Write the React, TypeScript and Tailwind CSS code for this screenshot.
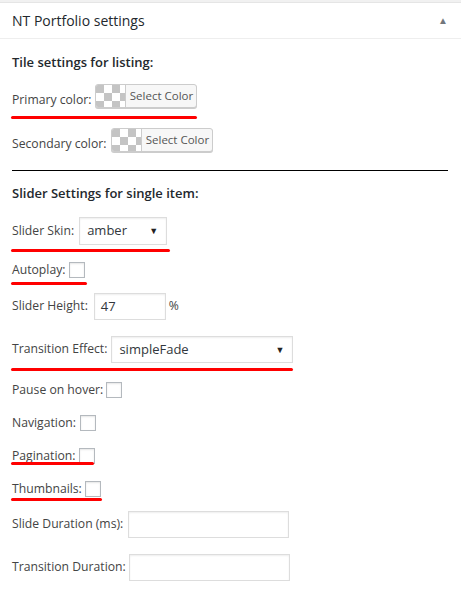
import React from 'react';

const font = { fontFamily: '"Open Sans", "Noto Sans", sans-serif' };

function Underlined({ width, offset, children }: { width: number; offset: number; children: React.ReactNode }) {
  return (
    <div className="relative">
      {children}
      <span
        className="absolute left-[-1px] h-[3px] rounded-full bg-[#ff0000]"
        style={{ width, bottom: offset }}
      />
    </div>
  );
}

function ColorButton() {
  return (
    <div className="flex h-[24px] w-[102px] overflow-hidden rounded-[3px] border border-[#cccccc] bg-[#f7f7f7] shadow-[0_1px_0_#cccccc]">
      <span className="w-[30px] shrink-0 border-r border-[#cccccc] bg-[conic-gradient(#ffffff_25%,#c4c4c4_0_50%,#ffffff_0_75%,#c4c4c4_0)] bg-[length:16px_16px]" />
      <span className="flex flex-1 items-center justify-center text-[11.5px] text-[#555555]">Select Color</span>
    </div>
  );
}

function Checkbox() {
  return <span className="inline-block h-[16px] w-[16px] border border-[#b4b9be] bg-white shadow-[inset_0_1px_2px_rgba(0,0,0,0.1)]" />;
}

function SelectBox({ value, w, h }: { value: string; w: string; h: string }) {
  return (
    <div className={`flex ${w} ${h} items-center justify-between border border-[#dddddd] bg-white pl-[7px] pr-[8px] text-[13px] text-[#32373c] shadow-[inset_0_1px_2px_rgba(0,0,0,0.07)]`}>
      <span>{value}</span>
      <span className="text-[9px] text-[#222222]">▼</span>
    </div>
  );
}

function TextInput({ value, w }: { value?: string; w: string }) {
  return (
    <div className={`flex ${w} h-[27px] items-center border border-[#dddddd] bg-white px-[6px] text-[13px] text-[#32373c] shadow-[inset_0_1px_2px_rgba(0,0,0,0.07)]`}>
      {value}
    </div>
  );
}

export default function App() {
  return (
    <div className="min-h-screen w-[461px] bg-white text-[12.2px] text-[#444444]" style={font}>
      <div className="h-[3px] border-b border-[#e5e5e5] bg-[#f1f1f1]" />
      <div className="flex h-[36px] items-center justify-between border-b border-[#eeeeee] pl-3 pr-[13px]">
        <h2 className="text-[14px] text-[#23282d]">NT Portfolio settings</h2>
        <span className="text-[10px] text-[#72777c]">▲</span>
      </div>

      <div className="flex flex-col items-start pl-3 pr-[13px]">
        <h3 className="mt-[13px] text-[13px] leading-[20px] font-semibold text-[#23282d]">Tile settings for listing:</h3>

        <div className="mt-[12px]">
          <Underlined width={186} offset={-11}>
            <div className="flex items-end gap-[4px]">
              <span className="leading-[18px] translate-y-[1px]">Primary color:</span>
              <ColorButton />
            </div>
          </Underlined>
        </div>

        <div className="mt-[20px] flex items-end gap-[5px]">
          <span className="leading-[18px] translate-y-[1px]">Secondary color:</span>
          <ColorButton />
        </div>

        <div className="mt-[18px] w-full border-t border-black" />

        <h3 className="mt-[12px] text-[13px] leading-[20px] font-semibold text-[#23282d]">Slider Settings for single item:</h3>

        <div className="mt-[14px]">
          <Underlined width={159} offset={-7}>
            <div className="flex items-center gap-[5px]">
              <span>Slider Skin:</span>
              <SelectBox value="amber" w="w-[88px]" h="h-[28px]" />
            </div>
          </Underlined>
        </div>

        <div className="mt-[16px]">
          <Underlined width={76} offset={-6}>
            <div className="flex h-[18px] items-center gap-[4px]">
              <span>Autoplay:</span>
              <Checkbox />
            </div>
          </Underlined>
        </div>

        <div className="mt-[14px] flex items-center gap-[6px]">
          <span>Slider Height:</span>
          <TextInput value="47" w="w-[72px]" />
          <span className="-ml-[3px]">%</span>
        </div>

        <div className="mt-[16px]">
          <Underlined width={282} offset={-8}>
            <div className="flex items-center gap-[4px]">
              <span>Transition Effect:</span>
              <SelectBox value="simpleFade" w="w-[182px]" h="h-[27px]" />
            </div>
          </Underlined>
        </div>

        <div className="mt-[18px] flex h-[18px] items-center gap-[3px]">
          <span>Pause on hover:</span>
          <Checkbox />
        </div>

        <div className="mt-[15px] flex h-[18px] items-center gap-[4px]">
          <span>Navigation:</span>
          <Checkbox />
        </div>

        <div className="mt-[15px]">
          <Underlined width={83} offset={0}>
            <div className="flex h-[18px] items-center gap-[4px]">
              <span>Pagination:</span>
              <Checkbox />
            </div>
          </Underlined>
        </div>

        <div className="mt-[15px]">
          <Underlined width={91} offset={-3}>
            <div className="flex h-[18px] items-center gap-[3px]">
              <span>Thumbnails:</span>
              <Checkbox />
            </div>
          </Underlined>
        </div>

        <div className="mt-[13px] flex items-center gap-[5px]">
          <span>Slide Duration (ms):</span>
          <TextInput w="w-[161px]" />
        </div>

        <div className="mt-[16px] flex items-center gap-[3px]">
          <span>Transition Duration:</span>
          <TextInput w="w-[161px]" />
        </div>
      </div>
    </div>
  );
}
